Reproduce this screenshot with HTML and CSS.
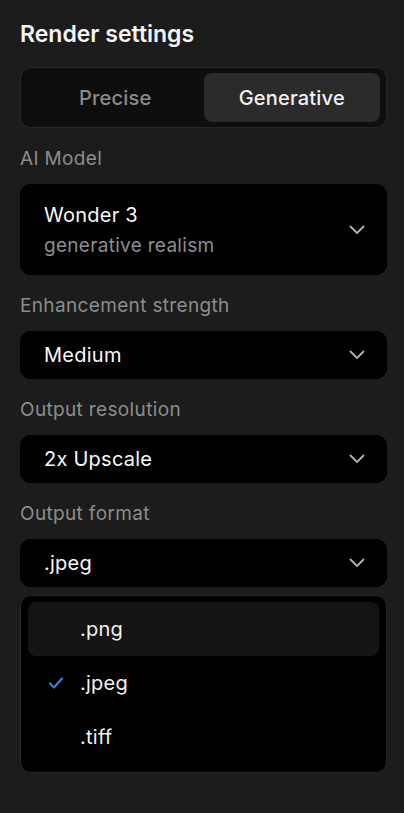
FILE: index.html
```html
<!DOCTYPE html>
<html lang="en">
<head>
  <meta charset="UTF-8" />
  <meta name="viewport" content="width=device-width, initial-scale=1.0" />
  <title>Render settings</title>
  <link rel="stylesheet" href="styles.css">
</head>
<body>

<div class="panel">
  <h2 class="title">Render settings</h2>

  <div class="segmented">
    <button class="seg-btn">Precise</button>
    <button class="seg-btn active">Generative</button>
  </div>

  <div class="field">
    <label class="field-label">AI Model</label>
    <div class="select tall">
      <div class="select-text">
        <span class="select-value">Wonder 3</span>
        <span class="select-sub">generative realism</span>
      </div>
      <svg class="chevron" viewBox="0 0 16 10"><path d="M1.5 1.5 L8 8 L14.5 1.5" /></svg>
    </div>
  </div>

  <div class="field">
    <label class="field-label">Enhancement strength</label>
    <div class="select">
      <span class="select-value">Medium</span>
      <svg class="chevron" viewBox="0 0 16 10"><path d="M1.5 1.5 L8 8 L14.5 1.5" /></svg>
    </div>
  </div>

  <div class="field">
    <label class="field-label">Output resolution</label>
    <div class="select">
      <span class="select-value">2x Upscale</span>
      <svg class="chevron" viewBox="0 0 16 10"><path d="M1.5 1.5 L8 8 L14.5 1.5" /></svg>
    </div>
  </div>

  <div class="field">
    <label class="field-label">Output format</label>
    <div class="select">
      <span class="select-value">.jpeg</span>
      <svg class="chevron" viewBox="0 0 16 10"><path d="M1.5 1.5 L8 8 L14.5 1.5" /></svg>
    </div>

    <ul class="menu">
      <li class="menu-item hover"><span class="check"></span>.png</li>
      <li class="menu-item">
        <span class="check"><svg viewBox="0 0 16 14"><path d="M2 7.5 L6 11.5 L14 2.5" /></svg></span>.jpeg
      </li>
      <li class="menu-item"><span class="check"></span>.tiff</li>
    </ul>
  </div>
</div>

</body>
</html>
```

FILE: styles.css
```css
* {
  margin: 0;
  padding: 0;
  box-sizing: border-box;
  font-family: Inter, "Noto Sans", sans-serif;
}

body {
  background: #1c1c1c;
  color: #fff;
  min-height: 100vh;
}

.panel {
  padding: 20px 17px 20px 20px;
}

.title {
  font-size: 23px;
  font-weight: 600;
  line-height: 28px;
  color: #f4f4f4;
}

/* Precise / Generative toggle */
.segmented {
  display: flex;
  margin-top: 19px;
  padding: 5px 6px;
  background: #0e0e0e;
  border: 1px solid #262626;
  border-radius: 11px;
}

.seg-btn {
  flex: 1;
  height: 49px;
  border: none;
  border-radius: 8px;
  background: transparent;
  color: #8a8a8a;
  font-size: 20px;
  font-weight: 500;
  letter-spacing: 0.2px;
  cursor: pointer;
}

.seg-btn.active {
  background: #2b2b2b;
  color: #f2f2f2;
}

.field {
  margin-top: 19px;
}

.field-label {
  display: block;
  font-size: 19px;
  line-height: 24px;
  letter-spacing: 0.35px;
  color: #8c8c8c;
  margin-bottom: 13px;
}

.select {
  display: flex;
  align-items: center;
  justify-content: space-between;
  height: 48px;
  padding: 0 22px 0 24px;
  background: #000;
  border-radius: 11px;
  cursor: pointer;
}

.select.tall {
  height: 91px;
}

.select-text {
  display: flex;
  flex-direction: column;
  gap: 6px;
}

.select-value {
  font-size: 20px;
  line-height: 26px;
  letter-spacing: 0.25px;
  color: #fafafa;
}

.select-sub {
  font-size: 19px;
  line-height: 24px;
  letter-spacing: 0.3px;
  color: #8e8e8e;
}

.chevron {
  width: 16px;
  height: 10px;
  fill: none;
  stroke: #b0b0b0;
  stroke-width: 1.8;
  stroke-linecap: round;
  stroke-linejoin: round;
}

/* open dropdown list */
.menu {
  list-style: none;
  margin-top: 8px;
  padding: 6px 7px 8px;
  background: #000;
  border: 1px solid #262626;
  border-radius: 11px;
}

.menu-item {
  display: flex;
  align-items: center;
  height: 54px;
  padding-left: 20px;
  border-radius: 8px;
  font-size: 20px;
  letter-spacing: 0.25px;
  color: #f2f2f2;
}

.menu-item.hover {
  background: #141414;
}

.check {
  width: 16px;
  height: 14px;
  margin-right: 16px;
}

.check svg {
  width: 16px;
  height: 14px;
  display: block;
  fill: none;
  stroke: #3b7ddd;
  stroke-width: 2.2;
  stroke-linecap: round;
  stroke-linejoin: round;
}
```
